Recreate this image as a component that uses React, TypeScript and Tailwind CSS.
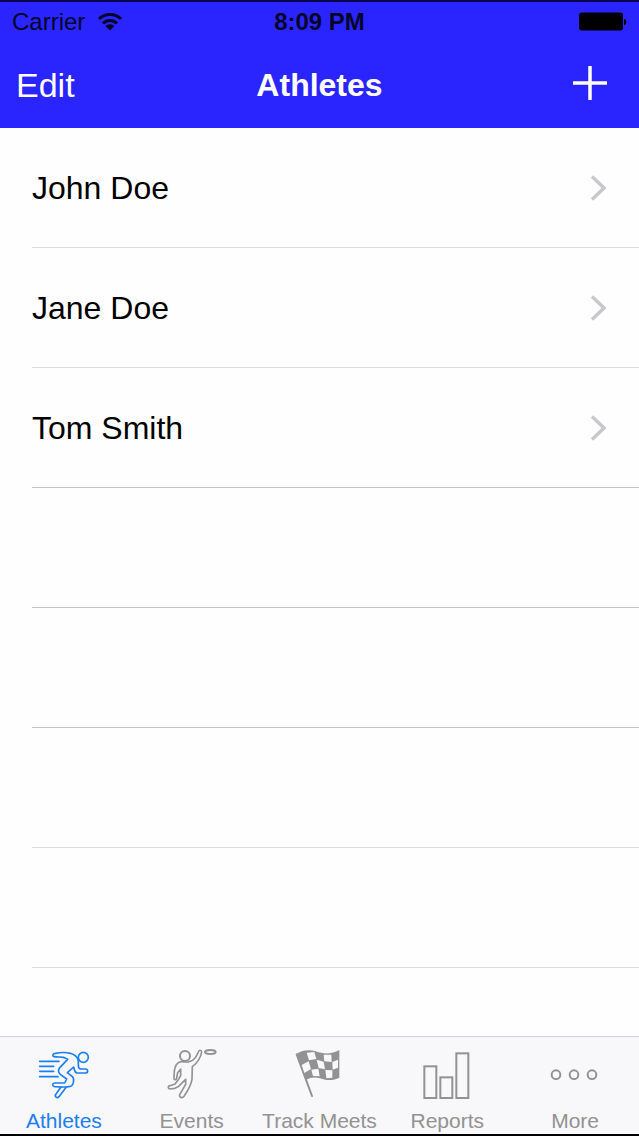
import { useState } from 'react';
import type { ReactNode } from 'react';

type Athlete = { id: number; name: string; line: string };

const athletes: Athlete[] = [
  { id: 1, name: 'John Doe', line: 'border-[#dcdcde]' },
  { id: 2, name: 'Jane Doe', line: 'border-[#dcdcde]' },
  { id: 3, name: 'Tom Smith', line: 'border-[#c4c4c7]' },
];

// Blank rows that fill the rest of the table
const emptyRows = ['border-[#c4c4c7]', 'border-[#c4c4c7]', 'border-[#dcdcde]', 'border-[#dcdcde]'];

function TabIcon({ children }: { children: ReactNode }) {
  return (
    <svg
      viewBox="96 48 192 168"
      className="h-14 w-16"
      fill="none"
      stroke="currentColor"
      strokeWidth="6"
      strokeLinecap="round"
      strokeLinejoin="round"
      aria-hidden="true"
    >
      {children}
    </svg>
  );
}

function RunnerIcon() {
  return (
    <TabIcon>
      <g transform="translate(102 42)" strokeWidth="5">
        <path d="M17 55H75M17 70H59M17 85H59M17 101H72" />
        <circle cx="148" cy="43" r="15" />
        <path d="M60 41C54 38 56 32 64 31C80 28 98 28 109 31C121 35 130 43 132 50C134 57 132 66 134 74L139 78L155 78C163 79 163 89 155 90L129 90C122 90 122 82 119 72L100 89L115 101C121 106 119 113 118 119C116 127 112 131 105 131L97 132L75 161C69 167 60 161 66 153L81 132L62 131C54 130 54 121 62 120L92 120L98 108L79 94C72 88 72 80 78 73L101 49L88 43C80 41 70 43 60 41Z" />
        <path d="M81 132L97 132" />
      </g>
    </TabIcon>
  );
}

function DiscIcon() {
  return (
    <TabIcon>
      <circle cx="171" cy="81" r="15" />
      <ellipse cx="247" cy="69" rx="16" ry="6" />
      <path strokeWidth="5" d="M155 99C163 96 175 101 184 98C197 96 205 85 211 69C213 62 221 62 221 69C219 83 208 103 193 113L192 151C190 164 178 187 168 202C163 209 152 205 155 197L173 166L173 151L160 164C154 172 147 176 140 178L126 180C119 179 119 171 126 170L141 165L151 152L158 140L158 120L149 131L146 147C145 155 137 153 138 146L139 126C141 112 147 102 155 99Z" />
    </TabIcon>
  );
}

function FlagIcon() {
  return (
    <TabIcon>
      <g transform="translate(102 42)">
        <path d="M23 34L69 159" />
        <path d="M22 34C35 22 60 18 80 25C105 34 128 34 151 21V104C130 115 110 112 90 105C72 101 60 105 50 113Z" fill="currentColor" stroke="none" />
        {/* light squares */}
        <g fill="#f8f7f9" stroke="none">
          <path d="M53 29L76 27L82 48L60 52Z" />
          <path d="M104 35L127 35L128 57L106 55Z" />
          <path d="M38 66L59 55L66 78L46 90Z" />
          <path d="M83 50L104 56L108 79L89 75Z" />
          <path d="M130 57L147 50V74L131 80Z" />
          <path d="M67 80L88 77L92 100L72 99Z" />
          <path d="M109 81L130 82V104L112 106Z" />
        </g>
      </g>
    </TabIcon>
  );
}

function ReportsIcon() {
  return (
    <TabIcon>
      <g strokeLinejoin="miter">
        <rect x="124" y="112" width="36" height="95" />
        <rect x="172" y="145" width="36" height="62" />
        <rect x="220" y="73" width="36" height="134" />
      </g>
    </TabIcon>
  );
}

function MoreIcon() {
  return (
    <TabIcon>
      <circle cx="135" cy="137" r="13" />
      <circle cx="189" cy="137" r="13" />
      <circle cx="243" cy="137" r="13" />
    </TabIcon>
  );
}

const tabs = [
  { name: 'Athletes', icon: <RunnerIcon /> },
  { name: 'Events', icon: <DiscIcon /> },
  { name: 'Track Meets', icon: <FlagIcon /> },
  { name: 'Reports', icon: <ReportsIcon /> },
  { name: 'More', icon: <MoreIcon /> },
];

function StatusBar() {
  return (
    <div className="grid h-10 grid-cols-3 items-center px-3 text-2xl text-[#05052c]">
      <div className="flex items-center gap-3">
        <span>Carrier</span>
        <svg viewBox="0 0 26 20" className="h-5 w-[26px]" fill="none" stroke="currentColor" strokeWidth="3" aria-hidden="true">
          <path d="M2 7C8 1 18 1 24 7M6 11.500C10 7.500 16 7.500 20 11.500" />
          <path d="M8.500 14C11 11.500 15 11.500 17.500 14L13 18.500Z" fill="currentColor" stroke="none" />
        </svg>
      </div>
      <span className="text-center font-bold">8:09 PM</span>
      <svg viewBox="0 0 50 20" className="h-5 w-[50px] justify-self-end" aria-hidden="true">
        <rect x="2" y="0.500" width="44" height="18" rx="3" fill="#000" />
        <path d="M47 7C50 7 50 13 47 13Z" fill="#000" />
      </svg>
    </div>
  );
}

function App() {
  const [activeTab, setActiveTab] = useState('Athletes');

  return (
    <div className="flex min-h-dvh flex-col bg-[#fefefe] font-['Liberation_Sans',Arial,sans-serif]">
      {/* Header Section */}
      <header className="border-t-2 border-[#08064e] bg-[#2a25ff]">
        <StatusBar />
        <div className="grid h-[86px] grid-cols-3 items-center px-4 text-white">
          <button type="button" className="justify-self-start text-[34px]">
            Edit
          </button>
          <h1 className="text-center text-[32px] font-bold">Athletes</h1>
          <button type="button" aria-label="Add athlete" className="justify-self-end pr-4 pb-1">
            <svg viewBox="0 0 34 34" className="size-[34px]" stroke="currentColor" strokeWidth="3.500" aria-hidden="true">
              <path d="M17 0V34M0 17H34" />
            </svg>
          </button>
        </div>
      </header>

      {/* Athlete list */}
      <main className="flex-1">
        <ul className="pl-8">
          {athletes.map((athlete) => (
            <li key={athlete.id} className={`h-30 border-b ${athlete.line}`}>
              <button type="button" className="flex h-full w-full items-center justify-between pr-8 text-left text-[32px] text-black">
                <span>{athlete.name}</span>
                <svg viewBox="0 0 18 28" className="h-7 w-[18px]" fill="none" stroke="#c7c7cc" strokeWidth="3.500" aria-hidden="true">
                  <path d="M3 2.500L15 14L3 25.500" />
                </svg>
              </button>
            </li>
          ))}
          {emptyRows.map((line, index) => (
            <li key={index} className={`h-30 border-b ${line}`} aria-hidden="true" />
          ))}
        </ul>
      </main>

      {/* Tab bar */}
      <nav className="grid h-[100px] grid-cols-5 border-t border-b-2 border-t-[#d2d2d4] border-b-black bg-[#f8f7f9]">
        {tabs.map((tab) => (
          <button
            key={tab.name}
            type="button"
            onClick={() => setActiveTab(tab.name)}
            className={`flex flex-col items-center gap-2 pt-2 whitespace-nowrap text-[21px] leading-6 ${
              activeTab === tab.name ? 'text-[#1c7ff0]' : 'text-[#929292]'
            }`}
          >
            {tab.icon}
            <span>{tab.name}</span>
          </button>
        ))}
      </nav>
    </div>
  );
}

export default App;
